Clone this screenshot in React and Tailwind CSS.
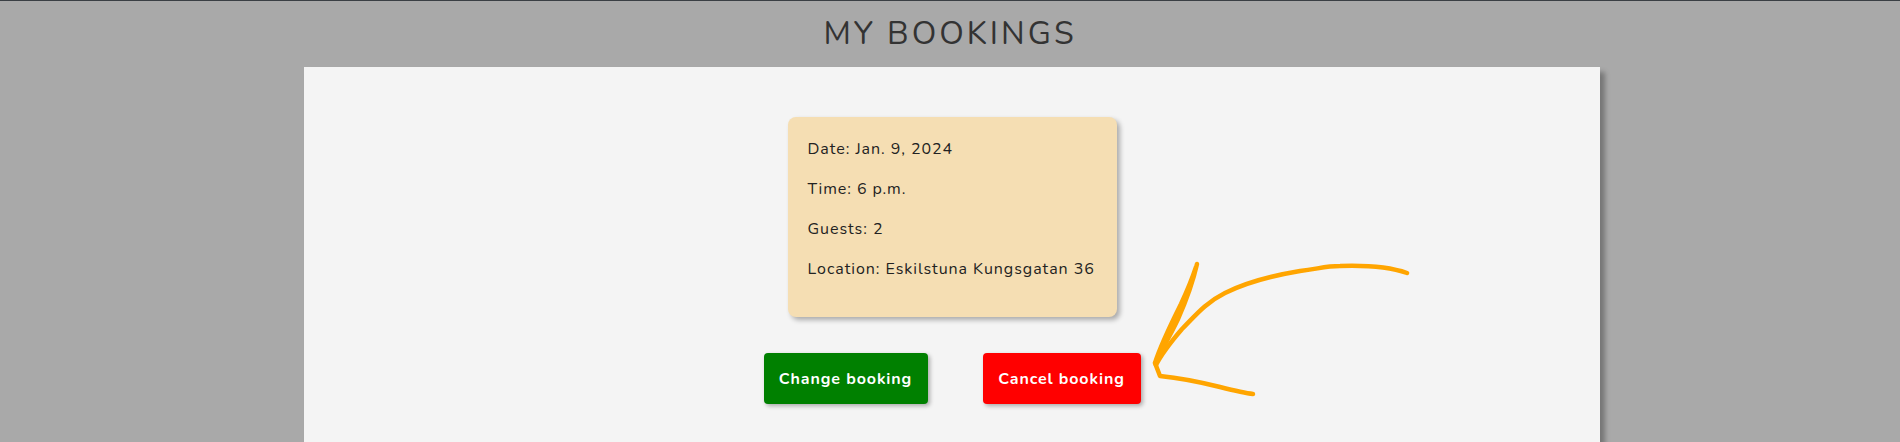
import React from "react";

// --- Booking card ---
const BookingCard = ({ booking }) => {
  return (
    <div className="w-[329px] rounded-lg bg-[#f5deb3] px-5 pt-5 pb-[36px] shadow-[3px_3px_5px_rgba(0,0,0,0.3)] text-[16px] leading-6 tracking-[0.95px] whitespace-nowrap text-[#222]">
      <p>Date: {booking.date}</p>
      <p className="mt-4">Time: {booking.time}</p>
      <p className="mt-4">Guests: {booking.guests}</p>
      <p className="mt-4">Location: {booking.location}</p>
    </div>
  );
};

// hand-drawn arrow pointing at the cancel button
const ScribbleArrow = () => (
  <svg
    className="absolute left-0 top-0 pointer-events-none"
    width="1900"
    height="442"
    viewBox="0 0 1900 442"
    fill="none"
  >
    <g stroke="#ffa500" strokeWidth="4.5" strokeLinecap="round" strokeLinejoin="round">
      <path d="M1407 272 C1390 266 1370 264 1340 265 C1325 265 1318 268 1300 270 C1270 275 1245 282 1225 292 C1205 302 1195 315 1182 328 C1170 342 1162 352 1156 364" />
      <path d="M1197 263 C1192 285 1186 300 1178 318 C1170 335 1162 348 1155 362 C1160 346 1170 325 1181 303 C1188 288 1193 275 1196 266" />
      <path d="M1155 362 L1160 375 C1180 377 1200 381 1220 386 C1232 389 1244 392 1253 393" />
    </g>
  </svg>
);

export default function App() {
  const booking = {
    date: "Jan. 9, 2024",
    time: "6 p.m.",
    guests: 2,
    location: "Eskilstuna Kungsgatan 36",
  };

  return (
    <div
      className="relative min-h-[442px] bg-[#a9a9a9] border-t border-[#3a3f44] overflow-hidden"
      style={{ fontFamily: '"Nunito", "Open Sans", "Noto Sans", sans-serif' }}
    >
      {/* Page title */}
      <h1 className="h-[66px] flex items-center justify-center text-[32px] tracking-[3px] text-[#333] font-normal">
        MY BOOKINGS
      </h1>

      {/* Content panel */}
      <main className="mx-auto w-[1296px] min-h-[420px] bg-[#f4f4f4] shadow-[5px_5px_5px_rgba(0,0,0,0.3)] translate-x-[2px] pt-[50px] flex flex-col items-center">
        <BookingCard booking={booking} />

        <div className="mt-[36px] flex gap-[55px]">
          <button className="w-[164px] h-[51px] rounded bg-[#008000] text-white font-bold text-[16px] tracking-[0.9px] shadow-[2px_2px_4px_rgba(0,0,0,0.3)]">
            Change booking
          </button>
          <button className="w-[158px] h-[51px] rounded bg-[#ff0000] text-white font-bold text-[16px] tracking-[0.9px] shadow-[2px_2px_4px_rgba(0,0,0,0.3)]">
            Cancel booking
          </button>
        </div>
      </main>

      <ScribbleArrow />
    </div>
  );
}
